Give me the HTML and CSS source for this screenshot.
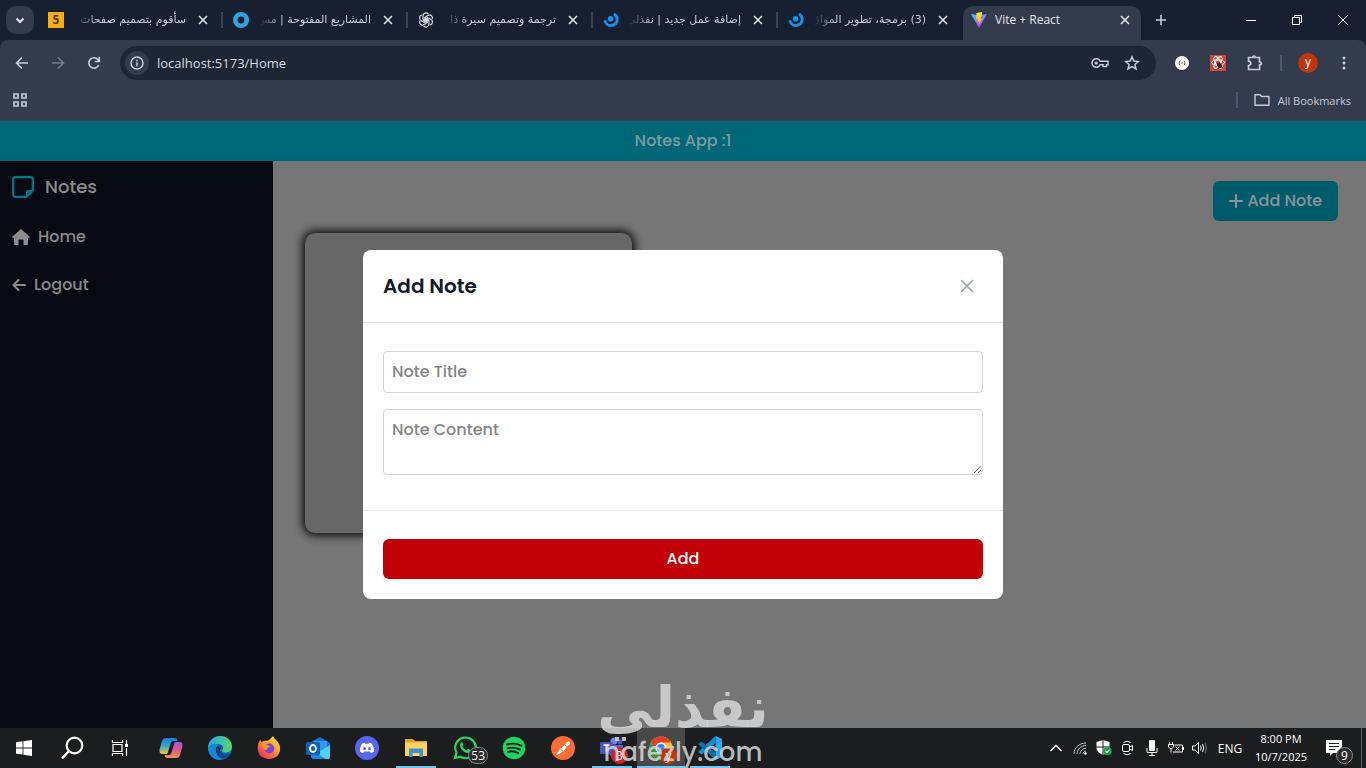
FILE: index.html
```html
<!DOCTYPE html>
<html lang="en">
<head>
    <meta charset="UTF-8">
    <meta name="viewport" content="width=device-width, initial-scale=1.0">
    <title>Vite + React</title>
    <link rel="stylesheet" href="styles.css">
</head>
<body>
    <header class="browser">
        <div class="tab-strip">
            <button class="tab-search" aria-label="Search tabs">
                <svg width="12" height="12" viewBox="0 0 12 12"><path d="M2.500 4.500L6 8l3.500-3.500" fill="none" stroke="currentColor" stroke-width="2"/></svg>
            </button>
            <div class="tab">
                <span class="favicon-five">5</span>
                <span class="tab-title" dir="rtl">سأقوم بتصميم صفحات</span>
                <button class="tab-close" aria-label="Close tab"><svg width="10" height="10" viewBox="0 0 10 10"><path d="M1 1l8 8M9 1L1 9"/></svg></button>
            </div>
            <div class="tab">
                <svg width="16" height="16" viewBox="0 0 16 16"><circle cx="8" cy="8" r="5.700" fill="none" stroke="#2ea3dc" stroke-width="4.600"/></svg>
                <span class="tab-title" dir="rtl">المشاريع المفتوحة | مس</span>
                <button class="tab-close" aria-label="Close tab"><svg width="10" height="10" viewBox="0 0 10 10"><path d="M1 1l8 8M9 1L1 9"/></svg></button>
            </div>
            <div class="tab">
                <svg width="16" height="16" viewBox="0 0 16 16">
                    <g fill="none" stroke="#d9dde3" stroke-width="1.200">
                        <path id="petal" d="M5 7.200V4a3 3 0 0 1 5.400-1.800M5 7.200l3.200 1.900 3-1.700"/>
                        <use href="#petal" transform="rotate(60 8 8)"/>
                        <use href="#petal" transform="rotate(120 8 8)"/>
                        <use href="#petal" transform="rotate(180 8 8)"/>
                        <use href="#petal" transform="rotate(240 8 8)"/>
                        <use href="#petal" transform="rotate(300 8 8)"/>
                    </g>
                </svg>
                <span class="tab-title" dir="rtl">ترجمة وتصميم سيرة ذا</span>
                <button class="tab-close" aria-label="Close tab"><svg width="10" height="10" viewBox="0 0 10 10"><path d="M1 1l8 8M9 1L1 9"/></svg></button>
            </div>
            <div class="tab">
                <svg width="16" height="16" viewBox="0 0 16 16"><path d="M1.800 8.200C2.600 12 5 13.500 8 13.500c4 0 6.500-3 6.200-6.500-.200-2.400-1.400-3.900-3.200-5" fill="none" stroke="#1492ee" stroke-width="2.800"/><circle cx="7.600" cy="6.800" r="2.800" fill="#1492ee"/></svg>
                <span class="tab-title" dir="rtl">إضافة عمل جديد | نفذلي</span>
                <button class="tab-close" aria-label="Close tab"><svg width="10" height="10" viewBox="0 0 10 10"><path d="M1 1l8 8M9 1L1 9"/></svg></button>
            </div>
            <div class="tab tab-last">
                <svg width="16" height="16" viewBox="0 0 16 16"><path d="M1.800 8.200C2.600 12 5 13.500 8 13.500c4 0 6.500-3 6.200-6.500-.200-2.400-1.400-3.900-3.200-5" fill="none" stroke="#1492ee" stroke-width="2.800"/><circle cx="7.600" cy="6.800" r="2.800" fill="#1492ee"/></svg>
                <span class="tab-title" dir="rtl">(3) برمجة، تطوير المواق</span>
                <button class="tab-close" aria-label="Close tab"><svg width="10" height="10" viewBox="0 0 10 10"><path d="M1 1l8 8M9 1L1 9"/></svg></button>
            </div>
            <div class="tab tab-active">
                <svg width="16" height="16" viewBox="0 0 16 16">
                    <defs>
                        <linearGradient id="vite" x1="0" y1="0" x2="0.600" y2="1"><stop offset="0" stop-color="#41d1ff"/><stop offset="1" stop-color="#bd34fe"/></linearGradient>
                        <linearGradient id="bolt" x1="0" y1="0" x2="0" y2="1"><stop offset="0" stop-color="#ffe83a"/><stop offset="1" stop-color="#ffa800"/></linearGradient>
                    </defs>
                    <path d="M0 2l8 14 8-14-8 1.500z" fill="url(#vite)"/>
                    <path d="M11 0L5.500 1.100 5 7.500l2-.400-.600 3 1.600-.500L7.600 13l3.800-6.500-2.100.400L11 3z" fill="url(#bolt)"/>
                </svg>
                <span class="tab-title">Vite + React</span>
                <button class="tab-close" aria-label="Close tab"><svg width="10" height="10" viewBox="0 0 10 10"><path d="M1 1l8 8M9 1L1 9"/></svg></button>
            </div>
            <button class="new-tab" aria-label="New tab"><svg width="12" height="12" viewBox="0 0 12 12"><path d="M6 1v10M1 6h10" stroke="currentColor" stroke-width="1.600"/></svg></button>
            <div class="window-controls">
                <button aria-label="Minimize"><svg width="10" height="10" viewBox="0 0 10 10"><path d="M0 5.500h10"/></svg></button>
                <button aria-label="Restore"><svg width="10" height="10" viewBox="0 0 10 10"><path d="M.500 2.500h7v7h-7zM2.500 2.500v-2h7v7h-2"/></svg></button>
                <button aria-label="Close"><svg width="10" height="10" viewBox="0 0 10 10"><path d="M0 0l10 10M10 0L0 10"/></svg></button>
            </div>
        </div>

        <div class="toolbar">
            <button class="tool" aria-label="Back"><svg width="16" height="16" viewBox="0 0 16 16"><path d="M14 8H3M8 2.500L2.500 8 8 13.500"/></svg></button>
            <button class="tool tool-off" aria-label="Forward"><svg width="16" height="16" viewBox="0 0 16 16"><path d="M2 8h11M8 2.500L13.500 8 8 13.500"/></svg></button>
            <button class="tool" aria-label="Reload"><svg width="16" height="16" viewBox="0 0 16 16"><path d="M12.800 10A5.200 5.200 0 1 1 12 4.600l1.200 1.600M13.300 1.800v4.700H8.800"/></svg></button>
            <div class="omnibox">
                <button class="site-info" aria-label="Site information"><svg width="14" height="14" viewBox="0 0 14 14"><circle cx="7" cy="7" r="6" fill="none" stroke="currentColor" stroke-width="1.500"/><path d="M7 6.300v4M7 3.700v1.500" stroke="currentColor" stroke-width="1.500"/></svg></button>
                <input class="url" type="text" aria-label="Address" value="localhost:5173/Home">
                <button class="omni-action" aria-label="Passwords"><svg width="18" height="16" viewBox="0 0 18 16"><path d="M9.200 6.200A4.300 4.300 0 1 0 9.200 9.800H12v1.800h3.500V9.800H17V6.200z"/><circle cx="5.200" cy="8" r="1.600" fill="currentColor" stroke="none"/></svg></button>
                <button class="omni-action" aria-label="Bookmark"><svg width="16" height="16" viewBox="0 0 16 16"><path d="M8 1.800l1.800 4.300 4.600.400-3.500 3 1.100 4.500L8 11.600 4 14l1.100-4.500-3.500-3 4.600-.400z"/></svg></button>
            </div>
            <div class="extensions">
                <button class="tool" aria-label="JSON viewer"><svg width="14" height="14" viewBox="0 0 14 14"><circle cx="7" cy="7" r="7" fill="#fff" stroke="none"/><path d="M5 4.500Q3 7 5 9.500M9 4.500Q11 7 9 9.500M6 7h2" stroke="#666" stroke-width="1"/></svg></button>
                <button class="tool" aria-label="React Developer Tools"><svg width="16" height="16" viewBox="0 0 16 16"><path d="M0 0h16v16H0z" fill="#d6453d" stroke="none"/><g stroke="#fff" stroke-width="1"><ellipse cx="8" cy="7.500" rx="6.500" ry="2.600"/><ellipse cx="8" cy="7.500" rx="6.500" ry="2.600" transform="rotate(60 8 7.500)"/><ellipse cx="8" cy="7.500" rx="6.500" ry="2.600" transform="rotate(120 8 7.500)"/></g><ellipse cx="9.500" cy="10.500" rx="2.200" ry="3" transform="rotate(-35 9.500 10.500)" fill="#2c1a18" stroke="none"/><path d="M7 8l6 5M12 8l-4 6" stroke="#2c1a18" stroke-width=".8"/></svg></button>
                <button class="tool" aria-label="Extensions"><svg width="18" height="18" viewBox="0 0 18 18"><path d="M3.500 3.500H8C7.800 1.500 10.200 1.500 10 3.500h4.500V8c2.400-.200 2.400 3 0 2.800v4.700h-11v-4c3-.300 3-4 0-4.300z"/></svg></button>
                <span class="tool-divider"></span>
                <button class="tool" aria-label="Profile"><span class="avatar">y</span></button>
                <button class="tool" aria-label="Menu"><svg width="16" height="16" viewBox="0 0 16 16"><g fill="currentColor" stroke="none"><circle cx="8" cy="3" r="1.500"/><circle cx="8" cy="8" r="1.500"/><circle cx="8" cy="13" r="1.500"/></g></svg></button>
            </div>
        </div>

        <div class="bookmarks">
            <button class="tool tool-small" aria-label="Apps"><svg width="16" height="16" viewBox="0 0 16 16"><path d="M2 2h4v4H2zM10 2h4v4h-4zM2 10h4v4H2zM10 10h4v4h-4z"/></svg></button>
            <div class="all-bookmarks">
                <span class="tool-divider"></span>
                <svg width="16" height="14" viewBox="0 0 16 14"><path d="M1 1.800h5l1.600 1.700H15v8.700H1z" fill="none" stroke="currentColor" stroke-width="1.400" stroke-linejoin="round"/></svg>
                <span>All Bookmarks</span>
            </div>
        </div>
    </header>

    <div class="page">
        <div class="topbar">Notes App :1</div>
        <div class="layout">
            <nav class="sidebar">
                <a class="brand" href="#">
                    <svg width="22" height="22" viewBox="0 0 22 22"><path d="M3.500 1.200h15a2.300 2.300 0 0 1 2.300 2.300v11l-6.300 6.300h-11a2.300 2.300 0 0 1-2.300-2.300v-15a2.300 2.300 0 0 1 2.300-2.300z" fill="none" stroke="#007689" stroke-width="2.200"/><path d="M14 20.500V15.500a1.500 1.500 0 0 1 1.500-1.500h5.300z" fill="#007689"/></svg>
                    Notes
                </a>
                <a class="nav-link" href="#">
                    <svg width="18" height="16" viewBox="0 0 18 16"><path d="M9 0l9 8-1 1.300h-1V15a1 1 0 0 1-1 1h-3.500v-4.500a1 1 0 0 0-1-1h-3a1 1 0 0 0-1 1V16H3a1 1 0 0 1-1-1V9.300H1L0 8z" fill="currentColor"/></svg>
                    Home
                </a>
                <a class="nav-link" href="#">
                    <svg width="14" height="14" viewBox="0 0 14 14"><path d="M13 7H2M6.500 2L1.500 7l5 5" fill="none" stroke="currentColor" stroke-width="2" stroke-linecap="round" stroke-linejoin="round"/></svg>
                    Logout
                </a>
            </nav>
            <main class="content">
                <button class="add-note">
                    <svg width="14" height="14" viewBox="0 0 14 14"><path d="M7 1v12M1 7h12" stroke="currentColor" stroke-width="2" stroke-linecap="round"/></svg>
                    Add Note
                </button>
                <div class="notes">
                    <article class="note-card"></article>
                </div>
            </main>
        </div>

        <div class="overlay">
            <form class="modal" role="dialog" aria-labelledby="modal-title">
                <div class="modal-header">
                    <h3 id="modal-title">Add Note</h3>
                    <button class="modal-close" type="button" aria-label="Close"><svg width="14" height="14" viewBox="0 0 14 14"><path d="M1.500 1.500l11 11M12.500 1.500l-11 11" fill="none" stroke="currentColor" stroke-width="1.700" stroke-linecap="round"/></svg></button>
                </div>
                <div class="modal-body">
                    <input class="field" type="text" aria-label="Note Title" placeholder="Note Title">
                    <textarea class="field" rows="2" aria-label="Note Content" placeholder="Note Content"></textarea>
                </div>
                <div class="modal-footer">
                    <button class="submit" type="button">Add</button>
                </div>
            </form>
        </div>
    </div>

    <footer class="taskbar">
        <div class="system-apps">
            <button class="app" aria-label="Start"><svg width="16" height="16" viewBox="0 0 16 16"><path d="M0 2.200l6.600-.900v6.200H0zM7.400 1.200L16 0v7.500H7.400zM0 8.400h6.600v6.200L0 13.700zM7.400 8.400H16V16l-8.600-1.200z" fill="#fff"/></svg></button>
            <button class="app" aria-label="Search"><svg width="24" height="24" viewBox="0 0 24 24"><circle cx="14.500" cy="9.500" r="7.800" fill="none" stroke="#fff" stroke-width="2.200"/><path d="M9 15l-7 7.500" stroke="#fff" stroke-width="2.400"/></svg></button>
            <button class="app" aria-label="Task view"><svg width="18" height="18" viewBox="0 0 18 18"><g fill="none" stroke="#fff" stroke-width="1.200"><path d="M2 5.500h9v7H2zM1.500 1v2.500h10V1M1.500 17v-2.500h10V17M15.500 1v4M15.500 9v8"/></g><path d="M14 5h3v3h-3z" fill="#fff"/></svg></button>
        </div>
        <div class="apps">
            <button class="app" aria-label="Copilot">
                <svg width="24" height="24" viewBox="0 0 24 24">
                    <defs>
                        <linearGradient id="cop1" x1="0" y1="0" x2="0" y2="1"><stop offset="0" stop-color="#1b7be0"/><stop offset="0.500" stop-color="#35a9c9"/><stop offset="1" stop-color="#f4c836"/></linearGradient>
                        <linearGradient id="cop2" x1="0" y1="0" x2="0" y2="1"><stop offset="0" stop-color="#9a5be0"/><stop offset="0.500" stop-color="#e2558e"/><stop offset="1" stop-color="#f7964a"/></linearGradient>
                    </defs>
                    <path d="M7 2h9c1.500 0 2 1 2.500 3H14c-1.500 0-2 1-2.500 2.500L9 16c-.500 1.500-1 2-2.500 2H4c-3 0-4-2-3.300-5l2.300-8C3.700 3 5 2 7 2z" fill="url(#cop1)"/>
                    <path d="M17 22H8c-1.500 0-2-1-2.500-3H10c1.500 0 2-1 2.500-2.500L15 8c.500-1.500 1-2 2.500-2H20c3 0 4 2 3.300 5L21 19c-.700 2-2 3-4 3z" fill="url(#cop2)"/>
                </svg>
            </button>
            <button class="app" aria-label="Edge">
                <svg width="24" height="24" viewBox="0 0 24 24">
                    <defs><linearGradient id="edge" x1="0" y1="0.300" x2="1" y2="0.500"><stop offset="0" stop-color="#2aa4e6"/><stop offset="1" stop-color="#57d86b"/></linearGradient></defs>
                    <circle cx="12" cy="12" r="12" fill="#0f62b5"/>
                    <path d="M0 11C1 4 6 0 12 0c7 0 12 5 12 10.500 0 4-3 6-6.500 6-3 0-4.200-1.200-3-2.500 1.500-2 .500-6-4.500-6C5 8 1 10 0 14z" fill="url(#edge)"/>
                    <path d="M9 10c-3 3-2 9 3 11 4 1.500 8 0 10-3-3 1.500-7 1.500-9-1-1-1.300-1.500-3 0-5z" fill="#1d1f20"/>
                    <path d="M0 12c2-5 8-5.500 10-3-4 4-2 11 4 14.800C6 25 0 19 0 12z" fill="#1787d4"/>
                    <path d="M9 11c-2 5 1 10 6 11 3-.500 5-2 6.500-4-4 1.500-8 1-9.500-2z" fill="#0c4b94"/>
                </svg>
            </button>
            <button class="app" aria-label="Firefox">
                <svg width="24" height="24" viewBox="0 0 24 24">
                    <defs><linearGradient id="fox" x1="1" y1="0" x2="0.200" y2="1"><stop offset="0" stop-color="#fff04a"/><stop offset="0.500" stop-color="#ff9a28"/><stop offset="1" stop-color="#f0246e"/></linearGradient></defs>
                    <path d="M16 0c1 3 6 5 7 11 1 7-4 12-11 12S0 18 .800 11C1 8 2 5 3.500 3.500c0 1.500.500 2 1 2.500C6 5 8 4.500 9 4.800 12 5 13 3 16 0z" fill="url(#fox)"/>
                    <circle cx="12.300" cy="12.500" r="5" fill="#7a45d4"/>
                    <path d="M5 8c2-1 4 0 5 1.500 2-.500 3 .500 2.500 1.500-2 .500-3 1.500-2.500 3-3 0-5-2-5-6z" fill="#ff9226"/>
                </svg>
            </button>
            <button class="app" aria-label="Outlook">
                <svg width="24" height="24" viewBox="0 0 24 24"><path d="M5 6l9-5 10 6v14a2 2 0 0 1-2 2H8a3 3 0 0 1-3-3z" fill="#1670c8"/><path d="M8 5h13v10H8z" fill="#2f9be8"/><path d="M24 9L10 18l3 5h9a2 2 0 0 0 2-2z" fill="#50d0f5"/><path d="M5 14l15 9H8a3 3 0 0 1-3-3z" fill="#1e8ae0"/><rect y="6" width="14" height="13" rx="1.500" fill="#0f5fbd"/><ellipse cx="7" cy="12.500" rx="3" ry="3.500" fill="none" stroke="#fff" stroke-width="1.800"/></svg>
            </button>
            <button class="app" aria-label="Discord">
                <svg width="24" height="24" viewBox="0 0 24 24"><circle cx="12" cy="12" r="12" fill="#5865f2"/><path d="M8 7.200l1.800-.500.600 1h3.200l.600-1 1.800.500c1.800.600 3.200 4.500 3 8.300-1 .900-2 1.300-3.200 1.500l-1-1.500H9.200l-1 1.500C7 16.800 6 16.400 5 15.500c-.200-3.800 1.200-7.700 3-8.300z" fill="#fff"/><circle cx="9.500" cy="12.500" r="1.500" fill="#5865f2"/><circle cx="14.500" cy="12.500" r="1.500" fill="#5865f2"/></svg>
            </button>
            <button class="app app-open" aria-label="File Explorer">
                <svg width="24" height="24" viewBox="0 0 24 24"><path d="M1 3h8l2 2h12v5H1z" fill="#e4a32b"/><path d="M1 6.500h22V20H1z" fill="#fcd462"/><path d="M5 12.500h14V21h-3.500v-4h-7v4H5z" fill="#4190d0"/></svg>
            </button>
            <button class="app" aria-label="WhatsApp">
                <svg width="24" height="24" viewBox="0 0 24 24"><path d="M2 22l1.500-5.200A10.300 10.300 0 1 1 7.300 20.700z" fill="none" stroke="#25d366" stroke-width="2.200"/><path d="M8 6.500c1-.700 1.500-.300 1.800.700l.600 1.500-1 1.500c1 2 2.300 3 4.200 4l1.500-1.500 2.500 1.200c.300 2-1.600 3-3 3C10.500 16.800 6.500 12 7 8.500z" fill="#25d366"/></svg>
                <span class="badge">53</span>
            </button>
            <button class="app" aria-label="Spotify">
                <svg width="24" height="24" viewBox="0 0 24 24"><circle cx="12" cy="12" r="11.300" fill="#1ed35f"/><path d="M5 8.500c5-1.500 10-1 14.500 1.300M5.500 12.300c4.500-1.300 8.500-.800 12.300 1.200M6 15.800c3.800-1 7-.600 10.300 1.200" fill="none" stroke="#1d1f20" stroke-width="1.900" stroke-linecap="round"/></svg>
            </button>
            <button class="app" aria-label="Postman">
                <svg width="24" height="24" viewBox="0 0 24 24"><circle cx="12" cy="12" r="12" fill="#ff6c37"/><path d="M5 19l4-6 5-4 2-3 2.500-.500.500 2.500-2.500 2-4 5-5 3.500z" fill="#fff"/><path d="M9.500 13.500l3 2M14 9l2 2" stroke="#ff6c37" stroke-width=".8"/></svg>
            </button>
            <button class="app app-open" aria-label="Teams">
                <svg width="24" height="24" viewBox="0 0 24 24"><circle cx="14" cy="5" r="3.500" fill="#7b83eb"/><circle cx="20" cy="6" r="2.400" fill="#5059c9"/><path d="M9 9h14v7a5 5 0 0 1-5 5h-4a5 5 0 0 1-5-5z" fill="#5b63d3"/><rect y="6" width="13" height="12" rx="1" fill="#4b53bc"/><path d="M3.500 9h6M6.500 9v6.500" stroke="#fff" stroke-width="1.600"/></svg>
                <span class="badge badge-red">3</span>
            </button>
            <button class="app app-current" aria-label="Chrome">
                <svg width="24" height="24" viewBox="0 0 24 24"><circle cx="12" cy="12" r="11.500" fill="#fbc116"/><path d="M2 6.300A11.500 11.500 0 0 1 22 6.500H12A5.500 5.500 0 0 0 7 14.500z" fill="#e33b2e"/><path d="M2 6.300l5.200 8.500A5.500 5.500 0 0 0 13.500 17.300l-2.800 6.100A11.500 11.500 0 0 1 2 6.300z" fill="#229b4a"/><circle cx="12" cy="12" r="5.500" fill="#fff"/><circle cx="12" cy="12" r="4.300" fill="#4285f4"/></svg>
                <span class="badge badge-avatar">y</span>
            </button>
            <button class="app app-open" aria-label="Visual Studio Code">
                <svg width="24" height="24" viewBox="0 0 24 24"><path d="M17.500 0L24 3v18l-6.500 3z" fill="#29a8f2"/><path d="M17.500 0v7L3.500 18.500 0 16z" fill="#1a8ad8"/><path d="M17.500 24v-7L3.500 5.500 0 8z" fill="#0d6fb8"/></svg>
            </button>
        </div>
        <div class="tray">
            <button class="tray-icon" aria-label="Show hidden icons"><svg width="14" height="14" viewBox="0 0 14 14"><path d="M1.500 10L7 4.500l5.500 5.500" stroke-width="1.300"/></svg></button>
            <button class="tray-icon" aria-label="Network"><svg width="16" height="16" viewBox="0 0 16 16"><path d="M2 14C2 8 7 3 14 3M5 14c0-4.500 4-8.500 9-8.500M8 14c0-3 3-5.800 6-5.800M11 14c0-1.500 1.500-3 3-3" stroke="#c8c8c8"/><circle cx="13.500" cy="13.500" r="1.300" fill="#fff" stroke="none"/></svg></button>
            <button class="tray-icon" aria-label="Security"><svg width="16" height="16" viewBox="0 0 16 16"><path d="M7 0l6.500 2v6c0 3-2.500 5-6.500 7C3 13 .500 11 .500 8V2z" fill="#fff" stroke="none"/><path d="M7 0v15M0 7h14" stroke="#1d1f20"/><circle cx="11.500" cy="11" r="4.300" fill="#16a34a" stroke="none"/><path d="M9.500 11l1.500 1.500 2.600-2.800" stroke-width="1.200"/></svg></button>
            <button class="tray-icon" aria-label="Meet now"><svg width="16" height="16" viewBox="0 0 16 16"><rect x="2.500" y="4.500" width="7" height="7" rx="1.500"/><path d="M9.500 7l3-1.500v5l-3-1.500M3.500 2.500Q7 0 10.500 2.500M3.500 13.500Q7 16 10.500 13.500"/></svg></button>
            <button class="tray-icon" aria-label="Microphone"><svg width="16" height="16" viewBox="0 0 16 16"><rect x="5" y="0" width="6" height="11" rx="1" fill="#fff" stroke="none"/><path d="M3 8v4.500h10V8M8 12.500V15M5 15.500h6"/></svg></button>
            <button class="tray-icon" aria-label="Battery"><svg width="16" height="16" viewBox="0 0 16 16"><path d="M1.500 2v2.500M4.500 2v2.500M.500 4.500h5v2.500l-1.500 1.500H2L.500 7zM3 8.500v4M6.500 5h8v7H5M15.500 7v3M7.500 6.500l4 4M11.500 6.500l-4 4"/></svg></button>
            <button class="tray-icon" aria-label="Volume"><svg width="16" height="16" viewBox="0 0 16 16"><path d="M.500 6H3l3.500-3.500v11L3 10H.500zM8.500 5.500q1.500 2.500 0 5M10.500 4q2.500 4 0 8"/><path d="M13 2.500q3 5.500 0 11" stroke="#777"/></svg></button>
            <span class="language">ENG</span>
            <div class="clock"><span>8:00 PM</span><span>10/7/2025</span></div>
            <button class="notifications" aria-label="Notifications">
                <svg width="16" height="16" viewBox="0 0 16 16"><path d="M0 0h16v13H7l-3 3v-3H0z" fill="#fff"/><path d="M3 3.500h10M3 6.500h10M3 9.500h6" stroke="#1d1f20" stroke-width="1.200"/></svg>
                <span class="badge">9</span>
            </button>
        </div>
    </footer>

    <div class="watermark">
        <span class="watermark-ar" dir="rtl">نفذلي</span>
        <span class="watermark-en">nafezly.com</span>
    </div>
</body>
</html>
```
FILE: styles.css
```css
* {
    box-sizing: border-box;
}

body {
    margin: 0;
    height: 100vh;
    display: flex;
    flex-direction: column;
    position: relative;
    overflow: hidden;
    font-family: "Open Sans", "DejaVu Sans", sans-serif;
    background-color: #172031;
}

button {
    display: flex;
    align-items: center;
    justify-content: center;
    padding: 0;
    border: none;
    background: none;
    color: inherit;
    font-family: inherit;
    cursor: pointer;
}

svg {
    flex-shrink: 0;
}

/* Browser chrome */
.browser {
    color: #c5cbd8;
}

.tab-strip {
    display: flex;
    height: 40px;
    font-size: 12px;
}

.tab-search {
    width: 28px;
    height: 28px;
    margin: 6px 4px 6px 6px;
    border-radius: 10px;
    background-color: #333b4c;
    color: #e3e6ec;
}

.tab {
    display: flex;
    align-items: center;
    flex: 0 1 185px;
    min-width: 0;
    gap: 10px;
    padding: 0 13px 0 10px;
    background: linear-gradient(#3b4454, #3b4454) right center / 2px 16px no-repeat;
}

.tab-last {
    background: none;
}

.tab-title {
    flex: 1;
    min-width: 0;
    overflow: hidden;
    white-space: nowrap;
    line-height: 20px;
}

.tab-title[dir="rtl"] {
    font-family: "DejaVu Sans", sans-serif;
    font-size: 11px;
    line-height: 22px;
    -webkit-mask-image: linear-gradient(to right, transparent, #000 24px);
    mask-image: linear-gradient(to right, transparent, #000 24px);
}

.tab-close {
    width: 14px;
    height: 20px;
}

.tab-close path {
    stroke: #dfe3ea;
    stroke-width: 1.6;
}

.favicon-five {
    width: 16px;
    height: 16px;
    background-color: #f9ae17;
    color: #4c3a14;
    font-size: 12px;
    font-weight: 700;
    line-height: 16px;
    text-align: center;
}

.tab-active {
    flex-basis: 178px;
    gap: 8px;
    margin-top: 6px;
    padding: 0 9px 6px 8px;
    border-radius: 10px 10px 0 0;
    background: #343b4d;
    color: #e3e6ec;
}

.new-tab {
    width: 28px;
    margin-left: 6px;
}

.window-controls {
    display: flex;
    margin-left: auto;
}

.window-controls button {
    width: 46px;
}

.window-controls path {
    fill: none;
    stroke: #fff;
}

.toolbar {
    display: flex;
    align-items: center;
    height: 46px;
    padding: 0 4px;
    border-radius: 8px 8px 0 0;
    background-color: #343b4d;
}

.tool {
    width: 36px;
    height: 34px;
}

.tool-small {
    width: 32px;
}

.tool svg {
    fill: none;
    stroke: currentColor;
    stroke-width: 1.7;
}

.tool-off {
    color: #737a8a;
}

.omnibox {
    display: flex;
    align-items: center;
    flex: 1;
    height: 34px;
    margin: 0 8px;
    padding: 0 8px 0 5px;
    border-radius: 17px;
    background-color: #1d2634;
}

.site-info {
    width: 24px;
    height: 24px;
    border-radius: 50%;
    background-color: #343b4d;
}

.url {
    flex: 1;
    min-width: 0;
    margin-left: 8px;
    padding: 0;
    border: none;
    outline: none;
    background: none;
    color: #d5dae3;
    font-family: inherit;
    font-size: 13px;
    line-height: 20px;
}

.omni-action {
    width: 32px;
    height: 28px;
}

.omni-action svg {
    fill: none;
    stroke: currentColor;
    stroke-width: 1.5;
}

.extensions {
    display: flex;
    align-items: center;
}

.tool-divider {
    width: 2px;
    height: 16px;
    margin: 0 8px;
    background-color: #4d586a;
}

.avatar {
    width: 20px;
    height: 20px;
    border-radius: 50%;
    background-color: #bf360c;
    color: #fff;
    font-size: 12px;
    line-height: 18px;
}

.bookmarks {
    display: flex;
    align-items: center;
    justify-content: space-between;
    height: 35px;
    padding: 0 15px 6px 4px;
    border-bottom: 1px solid #35474f;
    background-color: #343b4d;
    font-size: 11px;
}

.all-bookmarks {
    display: flex;
    align-items: center;
    gap: 8px;
}

/* Notes app */
.page {
    display: flex;
    flex-direction: column;
    flex: 1;
    min-height: 0;
    position: relative;
    font-family: Poppins, Inter, sans-serif;
    font-size: 16px;
    font-weight: 500;
    line-height: 24px;
}

.topbar {
    padding: 8px;
    background-color: #006778;
    color: #7f9a9e;
    text-align: center;
}

.layout {
    display: flex;
    flex: 1;
    min-height: 0;
}

.sidebar {
    display: flex;
    flex-direction: column;
    gap: 24px;
    width: 20%;
    padding: 12px;
    background-color: #070a12;
    color: #8b8b8b;
}

.brand,
.nav-link {
    display: flex;
    align-items: center;
    gap: 8px;
    color: inherit;
    text-decoration: none;
}

.brand {
    gap: 11px;
    font-size: 18px;
    line-height: 28px;
}

.content {
    flex: 1;
    padding: 20px 28px 20px 32px;
    background-color: #767676;
}

.add-note {
    gap: 4px;
    margin-left: auto;
    padding: 8px 16px;
    border-radius: 6px;
    background-color: #005c6b;
    color: #8b9496;
    font-size: 16px;
    font-weight: 500;
    line-height: 24px;
}

.notes {
    display: grid;
    grid-template-columns: repeat(3, 1fr);
    gap: 24px;
    margin: 12px 4px 0 0;
}

.note-card {
    height: 300px;
    border-radius: 10px;
    background-color: #676767;
    box-shadow: 0 0 10px 2px #000;
}

/* Modal */
.overlay {
    position: absolute;
    inset: 0;
    display: flex;
    align-items: center;
    justify-content: center;
}

.modal {
    width: 640px;
    max-width: 100%;
    border-radius: 8px;
    background-color: #fff;
}

.modal-header {
    display: flex;
    align-items: center;
    justify-content: space-between;
    padding: 20px;
    border-bottom: 1px solid #e5e7eb;
}

.modal-header h3 {
    margin: 0;
    color: #111827;
    font-size: 20px;
    font-weight: 600;
    line-height: 32px;
}

.modal-close {
    width: 32px;
    height: 32px;
    color: #9ca3af;
}

.modal-body {
    display: flex;
    flex-direction: column;
    gap: 16px;
    padding: 28px 20px 35px;
}

.field {
    display: block;
    width: 100%;
    padding: 8px;
    border: 1px solid #d1d5db;
    border-radius: 4px;
    background-color: #fff;
    color: #111827;
    font-family: inherit;
    font-size: 16px;
    font-weight: 500;
    line-height: 24px;
}

.field::placeholder {
    color: #858585;
}

.modal-footer {
    padding: 28px 20px 20px;
    border-top: 1px solid #e5e7eb;
}

.submit {
    width: 100%;
    padding: 8px;
    border-radius: 6px;
    background-color: #c10007;
    color: #fff;
    font-size: 16px;
    font-weight: 500;
    line-height: 24px;
}

/* Windows taskbar */
.taskbar {
    display: flex;
    height: 40px;
    background-color: #1c1d1e;
    color: #fff;
}

.system-apps {
    display: flex;
}

.apps {
    display: flex;
    gap: 1px;
    margin-left: 3px;
}

.app {
    position: relative;
    width: 48px;
    height: 40px;
}

.app-open {
    background: linear-gradient(#76c5f0, #76c5f0) center bottom / 40px 2px no-repeat;
}

.app-current {
    background: linear-gradient(#76c5f0, #76c5f0) center bottom / 100% 2px no-repeat #484848;
}

.badge {
    position: absolute;
    right: 1px;
    bottom: 4px;
    min-width: 17px;
    height: 17px;
    padding: 0 2px;
    border: 1px solid #8a8a8a;
    border-radius: 9px;
    background-color: #2b2b2b;
    color: #fff;
    font-size: 12px;
    line-height: 15px;
    text-align: center;
}

.badge-red {
    right: 8px;
    border-color: #c4262e;
    background-color: #c4262e;
}

.badge-avatar {
    right: 8px;
    border-color: #bf360c;
    background-color: #bf360c;
}

.tray {
    display: flex;
    align-items: center;
    margin-left: auto;
    margin-right: 4px;
    padding-right: 7px;
    border-right: 1px solid #5b5b5b;
}

.tray-icon {
    width: 24px;
    height: 40px;
}

.tray-icon svg {
    fill: none;
    stroke: #fff;
}

.language {
    width: 36px;
    font-size: 12px;
    text-align: center;
}

.clock {
    display: flex;
    flex-direction: column;
    width: 66px;
    font-size: 11px;
    line-height: 18px;
    text-align: center;
}

.notifications {
    position: relative;
    width: 40px;
    height: 40px;
}

/* Watermark over the desktop */
.watermark {
    position: absolute;
    left: 0;
    right: 0;
    bottom: 0;
    display: flex;
    flex-direction: column;
    align-items: center;
    color: rgba(215, 215, 215, 0.85);
    font-weight: 700;
    pointer-events: none;
}

.watermark-ar {
    font-family: "DejaVu Sans", sans-serif;
    font-size: 56px;
    line-height: 56px;
}

.watermark-en {
    font-family: Poppins, "Open Sans", sans-serif;
    font-size: 26px;
    font-weight: 500;
    line-height: 32px;
}
```
